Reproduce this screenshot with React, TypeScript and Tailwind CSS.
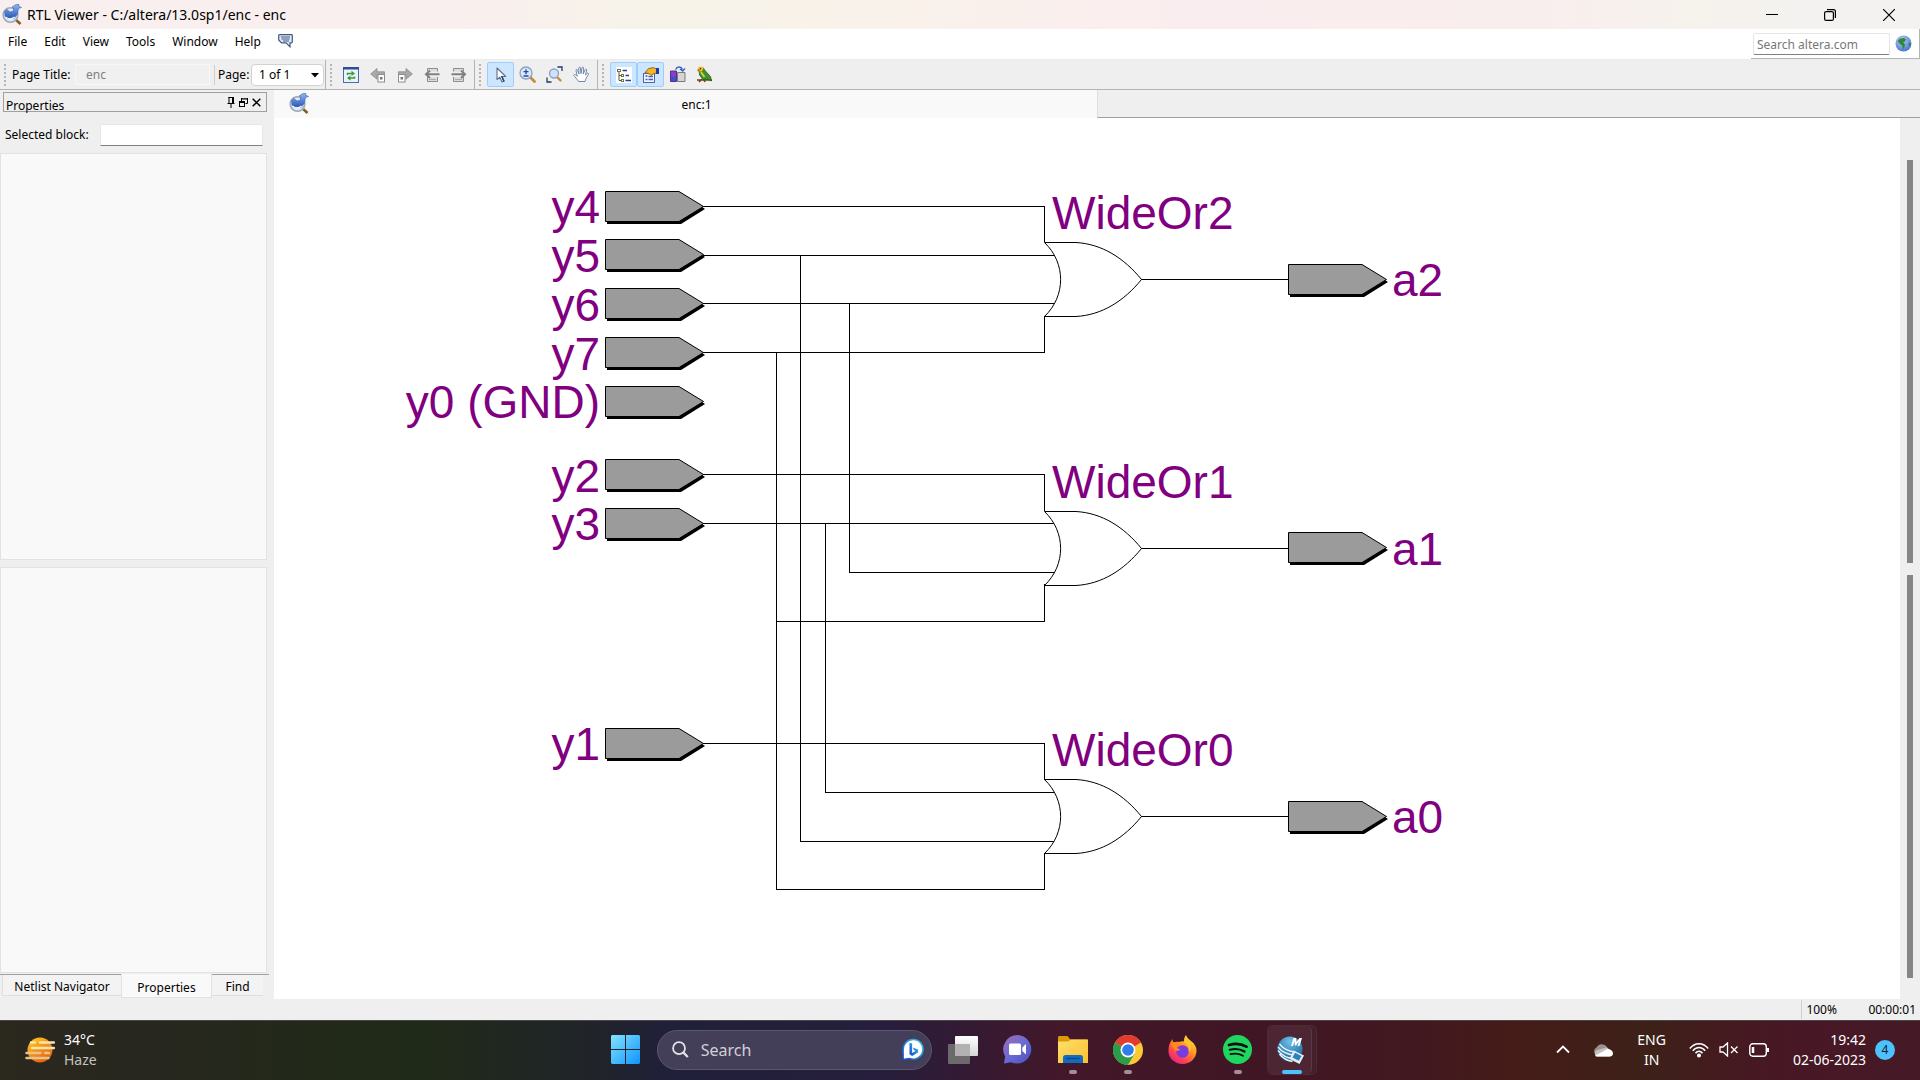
import React from "react";

const UI = "font-['Noto_Sans','Open_Sans',sans-serif]";

/* ---------- small drawings ---------- */

function AppIcon() {
  return (
    <svg width="20" height="21" viewBox="0 0 20 21" aria-hidden="true">
      <defs>
        <linearGradient id="birdBlue" x1="0" y1="0" x2="0" y2="1">
          <stop offset="0" stopColor="#8fb4f2" />
          <stop offset="1" stopColor="#2a56b8" />
        </linearGradient>
      </defs>
      <path d="M13.500 15.500l5 4.500" stroke="#8a5a22" strokeWidth="2.600" />
      <circle cx="8.500" cy="11" r="7.300" fill="#dfe9f6" stroke="#9aa9bb" strokeWidth="1.600" />
      <path d="M2.500 7.500L5 5.500l3 2.500 3.500-1V4L10 3l4-2.500h3L16.500 2l3 1.500-3 1-1 5.500-3.500 4.500H5.500L3 12z" fill="url(#birdBlue)" stroke="#3f66b5" strokeWidth=".6" />
      <path d="M4 13c2 2.500 6 2.500 8.500 0" stroke="#fff" strokeWidth="1.200" fill="none" />
    </svg>
  );
}

function FeedbackIcon() {
  return (
    <svg width="15" height="14" viewBox="0 0 15 14" aria-hidden="true">
      <path d="M1.500.7h12c.5 0 .8.4.8.8v6.500c0 .5-.3.8-.8.8h-1.500V12.800L8 8.800H3.500L.7 6V1.500c0-.4.4-.8.8-.8z" fill="#dbe8f8" stroke="#44597c" strokeWidth="1.200" />
      <path d="M3 3h9M3.500 5h8M5 7h6" stroke="#44597c" />
    </svg>
  );
}

function RefreshIcon() {
  return (
    <svg width="16" height="16" viewBox="0 0 16 16" aria-hidden="true">
      <rect x=".5" y=".5" width="15" height="15" fill="#eaf2fb" stroke="#4a6fa8" />
      <rect x="0" y="0" width="16" height="2.500" fill="#2d4f98" />
      <path d="M4.500 8V6.500h5" stroke="#3c9a32" strokeWidth="1.500" fill="none" />
      <path d="M8.500 3.800l3.500 2.700-3.500 2.500z" fill="#3c9a32" />
      <path d="M11.500 9.500v1.500h-5" stroke="#3c9a32" strokeWidth="1.500" fill="none" />
      <path d="M7.500 8.500L4 11l3.500 2.700z" fill="#3c9a32" />
    </svg>
  );
}

function NavArrow({ flip = false }: { flip?: boolean }) {
  return (
    <svg width="16" height="16" viewBox="0 0 16 16" aria-hidden="true" className={flip ? "-scale-x-100" : ""}>
      <path d="M.7 7L7 1.500v3.300h7.500v3H7v4.400z" fill="#a9a9a9" stroke="#8c8c8c" strokeWidth=".8" />
      <rect x="8" y="7.500" width="6.500" height="7.500" fill="#fff" stroke="#8c8c8c" />
      <rect x="10" y="10" width="2.500" height="2.500" fill="#777" />
    </svg>
  );
}

function PageArrow({ flip = false }: { flip?: boolean }) {
  return (
    <svg width="16" height="16" viewBox="0 0 16 16" aria-hidden="true" className={flip ? "-scale-x-100" : ""}>
      <path d="M3.500 4.500v-3h10v3M3.500 10v4.500h10V10" fill="#dcdcdc" stroke="#8e8e8e" />
      <path d="M5 12.500h7" stroke="#aaa" />
      <path d="M15.500 7.200H3M6 3.500L2 7.200 6 11" fill="none" stroke="#808080" strokeWidth="2" />
    </svg>
  );
}

function CursorIcon() {
  return (
    <svg width="16" height="16" viewBox="0 0 16 16" aria-hidden="true">
      <path d="M4 1v11.500l2.800-2.300L9 15l2-1-2-4.500h3.700z" fill="#fff" stroke="#5c6f8d" strokeWidth="1.100" strokeLinejoin="round" />
      <path d="M8.500 9l2.500 5.500" stroke="#2f4468" strokeWidth="1.600" />
    </svg>
  );
}

function ZoomIcon() {
  return (
    <svg width="17" height="17" viewBox="0 0 17 17" aria-hidden="true">
      <path d="M11 11l4.500 4.500" stroke="#c98a3c" strokeWidth="2.800" strokeLinecap="round" />
      <circle cx="7" cy="7" r="6" fill="#d9e8fa" stroke="#8aa1c2" strokeWidth="1.300" />
      <path d="M7 3.200v5M4.500 5.700h5M4.500 10h5" stroke="#2746a0" strokeWidth="1.300" />
    </svg>
  );
}

function FitIcon() {
  return (
    <svg width="17" height="17" viewBox="0 0 17 17" aria-hidden="true">
      <path d="M11.500 1h4.500v4M1 11.500V16h4.500" fill="none" stroke="#1f3b63" strokeWidth="1.300" />
      <path d="M10.500 10.500l4 4" stroke="#c98a3c" strokeWidth="2.400" strokeLinecap="round" />
      <circle cx="8" cy="7.500" r="4.500" fill="#cfe1f6" stroke="#8aa1c2" strokeWidth="1.300" />
    </svg>
  );
}

function HandIcon() {
  return (
    <svg width="17" height="17" viewBox="0 0 17 17" aria-hidden="true">
      <path d="M5.500 15.500C4 13 2 11 .9 9.500c-.4-.9.8-1.500 1.600-.7L4.300 10.300 3 4.300c-.1-1 1.200-1.200 1.500-.3L6 8 5.800 2c0-1.100 1.500-1.100 1.600 0L8 7.500l1-5.800c.2-1 1.500-.8 1.500.2L10.200 8l2-4.500c.5-.9 1.600-.4 1.400.5L12.500 9l1.800-1.700c.8-.5 1.700.2 1.200 1l-2.500 4.200-1 3z" fill="#fff" stroke="#7088ae" strokeWidth="1" strokeLinejoin="round" />
    </svg>
  );
}

function TreeIcon() {
  return (
    <svg width="16" height="16" viewBox="0 0 16 16" aria-hidden="true">
      <rect width="16" height="16" fill="#fff" />
      <path d="M3 4v9.500h3M3 8.500h3" fill="none" stroke="#555" />
      <rect x="1.500" y="2.500" width="3" height="2" fill="#fff" stroke="#6b7b3c" />
      <rect x="5.500" y="7.500" width="2" height="2" fill="#fff" stroke="#6b7b3c" />
      <rect x="5.500" y="12.500" width="2" height="2" fill="#fff" stroke="#6b7b3c" />
      <path d="M6.500 3.500H11M9.500 8.500H13M9.500 13.500H15" stroke="#2b3f9e" strokeWidth="1.300" />
    </svg>
  );
}

function PropertyIcon() {
  return (
    <svg width="16" height="16" viewBox="0 0 16 16" aria-hidden="true">
      <rect x=".5" y="6.500" width="11" height="9" fill="#f3f6fc" stroke="#52669c" />
      <path d="M2.500 9h2M2.500 12.500h2M5.500 9.500h4.500M5.500 12.500h4.500" stroke="#3f5fb8" strokeWidth="1.300" />
      <path d="M2 5.500l3.500-4 5-.9 3 1.400v4L10 7 8 8.500 6.500 7z" fill="#f3b52a" stroke="#7b5310" strokeWidth=".8" />
      <rect x="13" y="1" width="3" height="6" fill="#1c3ea4" />
    </svg>
  );
}

function ExchangeIcon() {
  return (
    <svg width="16" height="17" viewBox="0 0 16 17" aria-hidden="true">
      <path d="M.5 5h6v10.500h-6z" fill="#8a3fc4" stroke="#5e2a94" />
      <path d="M1 10.500h5v4.500H1z" fill="#3e4fd0" />
      <path d="M7.500 6.500h7.500v9H7.500z" fill="#d4d4d4" stroke="#7c7c7c" />
      <path d="M5.500 3.500c1.500-3 5.500-3.500 7 0M10 3l2.700 2L15 2.500" fill="none" stroke="#2f66c8" strokeWidth="1.400" />
    </svg>
  );
}

function ParrotIcon() {
  return (
    <svg width="17" height="17" viewBox="0 0 17 17" aria-hidden="true">
      <path d="M1 14h15M3 16l3-3M9 16l-1-2" stroke="#6a4426" strokeWidth="1.600" />
      <path d="M3 1.500h4l2 3 5.500 6 1 4.500-3-1.500H7L3.500 9z" fill="#3f8f2c" stroke="#22551a" strokeWidth=".7" />
      <path d="M2 1.500C3.500 0 6.500.2 7.500 2.500L6 5 3.500 6z" fill="#f4c629" />
      <path d="M1 4l2.500-1v3.500z" fill="#d4461c" />
      <path d="M5 6l3.500 5" stroke="#d7d531" strokeWidth="1.800" />
      <circle cx="4.500" cy="2.700" r=".7" fill="#111" />
    </svg>
  );
}

function GlobeIcon() {
  return (
    <svg width="17" height="17" viewBox="0 0 17 17" aria-hidden="true">
      <defs>
        <radialGradient id="globe" cx=".4" cy=".3" r=".8">
          <stop offset="0" stopColor="#b9d3fb" />
          <stop offset="1" stopColor="#3a68cb" />
        </radialGradient>
      </defs>
      <circle cx="8.500" cy="8.500" r="8" fill="url(#globe)" />
      <path d="M2.500 6L5 3.500l4-.5 2 1.500-1.500 2.500-1.500.5L10 9l-.5 3-1.700 2.500L7.500 11 4.500 8.500z" fill="#2f8a36" />
      <path d="M14 7.500l2 1.500-1 2.500-1.500-1.500z" fill="#2f8a36" />
    </svg>
  );
}

/* ---------- chrome ---------- */

function TitleBar() {
  return (
    <header className="flex h-[29px] items-center bg-[linear-gradient(90deg,#f9efee_0%,#f9efee_24%,#f7f3e9_34%,#f9f2ea_46%,#faedef_62%,#f9eeee_80%,#f6f2ec_88%,#f3f2f1_96%)] pl-[2px]">
      <AppIcon />
      <h1 className="ml-[5px] grow text-[14px] leading-5">RTL Viewer - C:/altera/13.0sp1/enc - enc</h1>
      <button aria-label="Minimize" className="flex h-full w-[56px] items-center justify-center">
        <svg width="12" height="12" viewBox="0 0 12 12"><path d="M0 5.500h12" stroke="#000" /></svg>
      </button>
      <button aria-label="Restore" className="flex h-full w-[60px] items-center justify-center">
        <svg width="12" height="12" viewBox="0 0 12 12" fill="none" stroke="#000" strokeWidth="1.200">
          <rect x=".6" y="2.600" width="8.800" height="8.800" rx="1.500" />
          <path d="M3 .6h6.500c1.200 0 1.900.8 1.900 1.900V9" />
        </svg>
      </button>
      <button aria-label="Close" className="flex h-full w-[60px] items-center justify-center pr-[2px]">
        <svg width="12" height="12" viewBox="0 0 12 12"><path d="M0 0l12 12M12 0L0 12" stroke="#000" strokeWidth="1.200" /></svg>
      </button>
    </header>
  );
}

function MenuBar() {
  return (
    <nav className="flex h-[31px] items-start border-b border-[#ececec] bg-white pl-[8px] text-[12px]">
      <div className="flex h-[26px] items-center gap-[17px]">
        {["File", "Edit", "View", "Tools", "Window", "Help"].map((m) => (
          <button key={m}>{m}</button>
        ))}
        <button aria-label="Feedback" className="pb-[2px]"><FeedbackIcon /></button>
      </div>
      <form className="ml-auto flex h-[30px] items-center gap-[5px] border-r border-b border-[#b4b4b4] pr-[7px] pl-[2px]">
        <input
          aria-label="Search altera.com"
          placeholder="Search altera.com"
          className="h-[22px] w-[137px] rounded-[2px] border border-[#e6e6e6] border-b-[#808080] px-[3px] pt-[2px] text-[12px] outline-none placeholder:text-[#777]"
        />
        <button type="button" aria-label="Search the web"><GlobeIcon /></button>
      </form>
    </nav>
  );
}

function Grip() {
  return (
    <span className="flex flex-col gap-[2px]">
      {[0, 1, 2, 3, 4, 5].map((i) => (
        <span key={i} className="h-[2px] w-[2px] bg-[#b5b5b5]" />
      ))}
    </span>
  );
}

function Tool({ label, on = false, children }: { label: string; on?: boolean; children: React.ReactNode }) {
  return (
    <button
      aria-label={label}
      className={`flex h-[25px] w-[27px] items-center justify-center rounded-[2px] border ${on ? "border-[#99cfff] bg-[#cce6ff]" : "border-transparent"}`}
    >
      {children}
    </button>
  );
}

function Toolbar() {
  return (
    <div className="flex h-[30px] items-stretch border-b border-[#b3b3b3] bg-[#efefef] text-[12px]">
      <div className="flex items-center border-r border-[#b3b3b3] pl-[4px]">
        <Grip />
        <label htmlFor="title" className="ml-[6px] w-[63px]">Page Title:</label>
        <input id="title" disabled value="enc" readOnly className="h-[21px] w-[135px] border border-[#f7f7f7] bg-[#f0f0f0] pl-[10px] text-[12px] text-[#808080]" />
        <span className="ml-[4px] h-[20px] w-px bg-[#cfcfcf]" />
        <label htmlFor="page" className="ml-[3px] w-[33px]">Page:</label>
        <span className="relative">
          <select id="page" className="block h-[22px] w-[73px] appearance-none rounded-[4px] border border-[#d2d2d2] bg-white pl-[7px] text-[12px]">
            <option>1 of 1</option>
          </select>
          <svg width="8" height="5" viewBox="0 0 8 5" className="pointer-events-none absolute top-[9px] right-[5px]"><path d="M0 0h8L4 4.500z" /></svg>
        </span>
        <span className="w-px" />
      </div>
      <div className="flex items-center border-r border-[#b3b3b3] pr-[2px] pl-[4px]">
        <Grip />
        <span className="ml-[5px] flex items-center">
          <Tool label="Refresh"><RefreshIcon /></Tool>
          <Tool label="Back"><NavArrow /></Tool>
          <Tool label="Forward"><NavArrow flip /></Tool>
          <Tool label="Previous page"><PageArrow /></Tool>
          <Tool label="Next page"><PageArrow flip /></Tool>
        </span>
      </div>
      <div className="flex items-center border-r border-[#b3b3b3] pr-[2px] pl-[4px]">
        <Grip />
        <span className="ml-[6px] flex items-center">
          <Tool label="Selection tool" on><CursorIcon /></Tool>
          <Tool label="Zoom tool"><ZoomIcon /></Tool>
          <Tool label="Fit in window"><FitIcon /></Tool>
          <Tool label="Hand tool"><HandIcon /></Tool>
        </span>
      </div>
      <div className="flex items-center pl-[4px]">
        <Grip />
        <span className="ml-[6px] flex items-center">
          <Tool label="Netlist navigator" on><TreeIcon /></Tool>
          <Tool label="Properties" on><PropertyIcon /></Tool>
          <Tool label="Switch view"><ExchangeIcon /></Tool>
          <Tool label="Bird's eye view"><ParrotIcon /></Tool>
        </span>
      </div>
    </div>
  );
}

function PropertiesDock() {
  return (
    <aside className="flex w-[274px] shrink-0 flex-col pb-[1px] text-[12px]">
      <div className="mt-[2px] ml-[3px] flex h-[20px] w-[264px] items-center border border-[#a0a0a0] pr-[5px] pl-[2px]">
        <h2 className="grow pt-[8px] leading-4">Properties</h2>
        <span className="flex items-center gap-[4px]">
          <button aria-label="Pin">
            <svg width="8" height="11" viewBox="0 0 8 11" fill="none" stroke="#000"><path d="M2 0v6M1.500.5h5M5.500 0v6M6.500 0v6M.5 6.500h7M4 6.500V11" /></svg>
          </button>
          <button aria-label="Float">
            <svg width="9" height="9" viewBox="0 0 9 9" fill="none" stroke="#000"><path d="M3 1h5.500M3 0h6M8.500 0v5.500H6.500M2.500 0v3" /><rect x=".5" y="3.500" width="5" height="5" /><path d="M0 4.500h6" /></svg>
          </button>
          <button aria-label="Close panel">
            <svg width="9" height="9" viewBox="0 0 9 9" stroke="#000" strokeWidth="1.500"><path d="M.7.7l7.600 7.600M8.300.7L.7 8.300" /></svg>
          </button>
        </span>
      </div>
      <div className="flex h-[41px] items-center pt-[5px] pl-[5px]">
        <label htmlFor="block" className="w-[95px]">Selected block:</label>
        <input id="block" className="h-[22px] w-[163px] border border-[#e8e8e8] border-b-[#808080] bg-white px-[3px] outline-none" />
      </div>
      <section aria-label="Block properties" className="w-[267px] flex-1 border border-[#e2e2e2] bg-[#f9f9f9]" />
      <section aria-label="Property values" className="mt-[7px] w-[267px] flex-1 border border-[#e2e2e2] bg-[#f9f9f9]" />
      <div className="mt-[1px] flex h-[24px] w-[269px] items-start border-t border-[#a0a0a0] pl-[2px]">
        <button className="h-[21px] w-[119px] border-b border-l border-[#dedede] bg-[#f3f3f3] pt-[3px]">Netlist Navigator</button>
        <button className="-mt-px h-[24px] w-[91px] border-x border-b border-[#e2e2e2] bg-[#f9f9f9] pt-[4px]">Properties</button>
        <button className="h-[21px] w-[51px] border-b border-[#dedede] bg-[#f3f3f3] pt-[3px]">Find</button>
      </div>
    </aside>
  );
}

/* ---------- schematic ---------- */

const inputs = [
  { name: "y4", top: 191, base: 223 },
  { name: "y5", top: 239, base: 272 },
  { name: "y6", top: 288, base: 321 },
  { name: "y7", top: 337, base: 370 },
  { name: "y0 (GND)", top: 386, base: 418 },
  { name: "y2", top: 459, base: 492 },
  { name: "y3", top: 508, base: 540 },
  { name: "y1", top: 728, base: 760 },
];

const gates = [
  { name: "WideOr2", out: "a2", mid: 279, top: 264 },
  { name: "WideOr1", out: "a1", mid: 548, top: 532 },
  { name: "WideOr0", out: "a0", mid: 816, top: 801 },
];

const wires = [
  "M703 206.500H1044.500V242",
  "M703 255.500H1055",
  "M703 303.500H1055",
  "M703 352.500H1044.500V316",
  "M703 474.500H1044.500V511",
  "M703 523.500H1055",
  "M849.500 303V572.500H1055",
  "M776.500 621.500H1044.500V584",
  "M703 743.500H1044.500V780",
  "M825.500 523V792.500H1055",
  "M800.500 255V841.500H1055",
  "M776.500 352V889.500H1044.500V853",
];

function Tag({ x, y }: { x: number; y: number }) {
  return (
    <g transform={`translate(${x} ${y})`}>
      <path d="M2 2H76L100 18L76 33H2z" fill="#000" />
      <path d="M.5.500H74L98.500 15.500L74 30.500H.5z" fill="#9b9b9b" stroke="#000" />
    </g>
  );
}

function Schematic() {
  return (
    <svg className="block h-full w-full" role="img" aria-label="Encoder schematic">
      <g transform="translate(-274 -118)" fontFamily="'Liberation Sans', Arial, sans-serif" fontSize="46" fill="#800080">
        <path d={wires.join("")} fill="none" stroke="#000" shapeRendering="crispEdges" />
        {inputs.map((p) => (
          <g key={p.name}>
            <Tag x={605} y={p.top} />
            <text x="600" y={p.base} textAnchor="end">{p.name}</text>
          </g>
        ))}
        {gates.map((g) => (
          <g key={g.name}>
            <g transform={`translate(0 ${g.mid})`}>
              <path d="M1044.500-36.500H1076C1102-35 1124-21 1141.500.500C1124 22 1102 36 1076 37.500H1044.500C1066 17 1066-16 1044.500-36.500z" fill="#fff" stroke="#000" />
              <path d="M1141 .5H1288" stroke="#000" />
            </g>
            <Tag x={1288} y={g.top} />
            <text x="1052" y={g.mid - 50}>{g.name}</text>
            <text x="1392" y={g.mid + 17}>{g.out}</text>
          </g>
        ))}
      </g>
    </svg>
  );
}

function Workspace() {
  return (
    <main className="flex min-w-0 grow flex-col">
      <div className="flex h-[28px] text-[12px]">
        <div className="relative flex w-1/2 items-center justify-center bg-[#f9f9f9] pt-[2px] pl-[22px]">
          <span className="absolute top-[3px] left-[15px]"><AppIcon /></span>
          <span>enc:1</span>
        </div>
        <div className="grow border-b border-l border-b-[#a0a0a0] border-l-[#dedede]" />
      </div>
      <div className="flex min-h-0 grow">
        <div className="min-w-0 grow overflow-hidden bg-white"><Schematic /></div>
        <div className="flex w-[20px] flex-col items-center gap-[12px] pt-[42px] pb-[21px]">
          <span className="w-[6px] flex-1 bg-[#868686]" />
          <span className="w-[6px] flex-1 bg-[#868686]" />
        </div>
      </div>
    </main>
  );
}

/* ---------- taskbar ---------- */

function WeatherIcon() {
  return (
    <svg width="30" height="26" viewBox="0 0 30 26" aria-hidden="true">
      <defs>
        <linearGradient id="sun" x1="0" y1="0" x2=".6" y2="1">
          <stop offset="0" stopColor="#ffd21c" />
          <stop offset="1" stopColor="#ea5f12" />
        </linearGradient>
      </defs>
      <circle cx="15" cy="13" r="12.500" fill="url(#sun)" />
      <g stroke="#f8e3b0" strokeWidth="2.500" strokeLinecap="round">
        <path d="M6 5.500h4M15 5.500h14M7 11h22" />
        <path d="M1.500 16h14M20 16h4M1.500 21h22" stroke="#e4c48c" />
      </g>
    </svg>
  );
}

function WindowsIcon() {
  return (
    <svg width="29" height="29" viewBox="0 0 29 29" aria-hidden="true">
      <defs>
        <linearGradient id="win" x1="0" y1="0" x2="29" y2="29" gradientUnits="userSpaceOnUse">
          <stop offset="0" stopColor="#84e4ff" />
          <stop offset="1" stopColor="#0f93fb" />
        </linearGradient>
      </defs>
      <path d="M1 0h13v14H0V1zM15 0h13l1 1v13H15zM0 15h14v14H1l-1-1zM15 15h14v13l-1 1H15z" fill="url(#win)" />
    </svg>
  );
}

function BingIcon() {
  return (
    <svg width="25" height="25" viewBox="0 0 25 25" aria-hidden="true">
      <defs>
        <linearGradient id="bing" x1="1" y1="0" x2="0" y2="1">
          <stop offset="0" stopColor="#37c8f0" />
          <stop offset="1" stopColor="#1548c8" />
        </linearGradient>
      </defs>
      <path d="M12.500 1.200a11.200 11.200 0 1 1-4 21.600L1.200 23.800V12.500A11.200 11.200 0 0 1 12.500 1.200z" fill="#fff" stroke="url(#bing)" strokeWidth="1.800" />
      <path d="M8.500 4.800l3 1v10.700l4-2.300-2-1-1.200-3 6 2.200v3.400l-6.800 4-3-1.800z" fill="url(#bing)" />
    </svg>
  );
}

function TaskViewIcon() {
  return (
    <svg width="30" height="28" viewBox="0 0 30 28" aria-hidden="true">
      <defs>
        <linearGradient id="tv" x1="0" y1="0" x2="0" y2="1">
          <stop offset="0" stopColor="#fff" />
          <stop offset="1" stopColor="#d6d6d6" />
        </linearGradient>
      </defs>
      <rect x="0" y="8" width="22" height="20" rx="1" fill="#6c6a6b" />
      <rect x="7" y="0" width="23" height="20" rx="1" fill="url(#tv)" />
      <path d="M7 8h15v12H7z" fill="#b3b1b2" />
    </svg>
  );
}

function ChatIcon() {
  return (
    <svg width="29" height="29" viewBox="0 0 29 29" aria-hidden="true">
      <defs>
        <linearGradient id="chat" x1="0" y1="0" x2="1" y2="1">
          <stop offset="0" stopColor="#a06cb4" />
          <stop offset=".5" stopColor="#6a6bd2" />
          <stop offset="1" stopColor="#4a50c0" />
        </linearGradient>
      </defs>
      <path d="M14.500 0A14.300 14.300 0 1 1 8 27.300L1 28.500l1.200-7A14.300 14.300 0 0 1 14.500 0z" fill="url(#chat)" />
      <rect x="6" y="8.500" width="12" height="11.500" rx="1.500" fill="#fff" />
      <path d="M19.300 12.500L23 9v10.500l-3.700-3.500z" fill="#fff" />
    </svg>
  );
}

function FolderIcon() {
  return (
    <svg width="30" height="27" viewBox="0 0 30 27" aria-hidden="true">
      <defs>
        <linearGradient id="fold" x1="0" y1="0" x2="1" y2="1">
          <stop offset="0" stopColor="#ffe06e" />
          <stop offset="1" stopColor="#fbbf2d" />
        </linearGradient>
      </defs>
      <path d="M0 1.500C0 .7.600 0 1.500 0h8l3 3.500H28c1 0 2 .5 2 1.500v6H0z" fill="#dc9a08" />
      <path d="M0 5.500h10L13 3.500h17V27H0z" fill="url(#fold)" />
      <path d="M5 27v-5.500C5 20 6 19 7.500 19h15c1.500 0 2.500 1 2.500 2.500V27z" fill="#0f6cc0" />
      <path d="M8.500 22.500h13" stroke="#0a3f80" strokeWidth="1.200" />
    </svg>
  );
}

function ChromeIcon() {
  return (
    <svg width="30" height="30" viewBox="0 0 30 30" aria-hidden="true">
      <circle cx="15" cy="15" r="15" fill="#fcc934" />
      <path d="M15 15L2 7.500A15 15 0 0 1 28 7.500z" fill="#e33b2e" />
      <path d="M2 7.500A15 15 0 0 0 15 30l6.500-11.200L15 15z" fill="#2a9c4c" />
      <circle cx="15" cy="15" r="7.500" fill="#fff" />
      <circle cx="15" cy="15" r="5.800" fill="#2f7ded" />
    </svg>
  );
}

function FirefoxIcon() {
  return (
    <svg width="29" height="29" viewBox="0 0 29 29" aria-hidden="true">
      <defs>
        <linearGradient id="ff" x1=".9" y1="0" x2=".2" y2="1">
          <stop offset="0" stopColor="#fff24a" />
          <stop offset=".4" stopColor="#ff9a1f" />
          <stop offset=".75" stopColor="#ff4052" />
          <stop offset="1" stopColor="#e0208c" />
        </linearGradient>
      </defs>
      <path d="M18 0c1 3 3 4 5 6 4 3 5.800 6.500 5.500 10.500C28 23.500 22 29 14.500 29S.5 23.500.5 16C.3 11 2 7 4.500 4c0 1.500.3 2.500 1 3.500C7 7 9 6.500 11 7c2-1 4-1 5-.5C15.800 4 16.500 2 18 0z" fill="url(#ff)" />
      <circle cx="14.500" cy="16.500" r="6.300" fill="#7a3ae0" />
      <path d="M3 9c2-2.500 6-2.500 9 0-1 .5-2 1.500-3.500 1.800C8 13 10 14.500 12.500 14c-1.500 2-4 2-5.500 1.500z" fill="#ff8a1c" />
      <path d="M16 7c4 2 5.800 6 4.500 10 2-1 3-4 2.500-7-2-4-5-3-5-6z" fill="#ffc62e" />
    </svg>
  );
}

function SpotifyIcon() {
  return (
    <svg width="29" height="29" viewBox="0 0 29 29" aria-hidden="true">
      <circle cx="14.500" cy="14.500" r="14.500" fill="#1ed760" />
      <g fill="none" stroke="#0c0c0c" strokeLinecap="round">
        <path d="M6 10c6-1.800 12.500-1.200 17.500 1.700" strokeWidth="2.700" />
        <path d="M6.800 14.800c5-1.400 10.500-.8 14.700 1.700" strokeWidth="2.200" />
        <path d="M7.500 19.200c4.500-1 8.800-.6 12.500 1.500" strokeWidth="1.800" />
      </g>
    </svg>
  );
}

function QuartusIcon() {
  return (
    <svg width="30" height="30" viewBox="0 0 30 30" aria-hidden="true">
      <defs>
        <radialGradient id="qt" cx=".5" cy=".2" r=".9">
          <stop offset="0" stopColor="#6fc0ea" />
          <stop offset="1" stopColor="#0c5690" />
        </radialGradient>
      </defs>
      <circle cx="15" cy="14" r="12.500" fill="url(#qt)" />
      <path d="M3 12c4 5 8 7.500 16 8M3 15.500c4 5 8 7.500 15 8M4.500 19c3 4 7 6.500 13 7.500M4.500 9c4 5 9 7.500 16 8" stroke="#eaf4fb" strokeWidth="1.300" fill="none" />
      <path d="M16 11l2.500-8H21l.5 4L24.500 3H27l-2.500 8h-2l1.500-4.500L21 10.500h-1L19.500 6.500 18 11z" fill="#fff" />
      <path d="M18.500 15.500L29 20.500l-4.500 8.500-10-5z" fill="#e5eef5" />
      <path d="M20 17.800l6.500 3.200-2.700 4.800-6.300-3.200z" fill="#2a83bd" />
    </svg>
  );
}

function TaskCell({ label, dot = false, children }: { label: string; dot?: boolean; children: React.ReactNode }) {
  return (
    <button aria-label={label} className="relative flex h-[60px] w-[55px] items-center justify-center">
      {children}
      {dot && <span className="absolute bottom-[6px] h-[4px] w-[8px] rounded-full bg-[#a48e98]" />}
    </button>
  );
}

function Taskbar() {
  return (
    <footer className="flex h-[60px] items-center border-t border-[#4a4648] bg-[linear-gradient(90deg,#2b281e_0%,#27271f_8%,#23291a_15%,#202a18_22%,#20242a_31%,#20203a_35%,#261e3c_46%,#331a34_50%,#42182a_55%,#401624_66%,#421820_74%,#451c18_79%,#3d2119_86%,#451a20_90%,#481726_94%,#451a26_100%)] pb-[2px] text-[14px] leading-5 text-white">
      <div className="flex flex-1 items-center gap-[9px] pl-[25px]">
        <WeatherIcon />
        <div>
          <div>34°C</div>
          <div className="text-[#c4c2bf]">Haze</div>
        </div>
      </div>
      <div className="flex items-center pl-[8px]">
        <button aria-label="Start"><WindowsIcon /></button>
        <label className="ml-[17px] flex h-[40px] w-[275px] items-center rounded-full border border-[#5c5670] bg-[#433f58] pr-[7px] pl-[14px]">
          <svg width="19" height="19" viewBox="0 0 19 19" fill="none" stroke="#e6e4ea" strokeWidth="2"><circle cx="8" cy="8" r="6.800" /><path d="M12.800 12.800L18 18" strokeWidth="2.500" /></svg>
          <input aria-label="Search" placeholder="Search" className="ml-[12px] min-w-0 grow bg-transparent text-[16px] outline-none placeholder:text-[#d2cfd8]" />
          <BingIcon />
        </label>
        <div className="ml-[3px] flex">
          <TaskCell label="Task view"><TaskViewIcon /></TaskCell>
          <TaskCell label="Chat"><ChatIcon /></TaskCell>
          <TaskCell label="File Explorer" dot><FolderIcon /></TaskCell>
          <TaskCell label="Chrome" dot><ChromeIcon /></TaskCell>
          <TaskCell label="Firefox"><FirefoxIcon /></TaskCell>
          <TaskCell label="Spotify" dot><SpotifyIcon /></TaskCell>
          <button aria-label="Quartus" className="relative mt-[5px] ml-[2px] flex h-[50px] w-[50px] rounded-[5px] border border-[#4f2a36] bg-[#44202c]">
            <span className="flex w-[44px] items-center justify-center rounded-[5px] border-r border-[#5d3743] bg-[#4c2733]"><QuartusIcon /></span>
            <span className="absolute bottom-0 left-[14px] h-[4px] w-[20px] rounded-full bg-[#4cc2ff]" />
          </button>
        </div>
      </div>
      <div className="flex flex-1 items-center justify-end pr-[25px]">
        <button aria-label="Show hidden icons">
          <svg width="14" height="9" viewBox="0 0 14 9"><path d="M1 7.500l6-6 6 6" fill="none" stroke="#fff" strokeWidth="1.800" /></svg>
        </button>
        <svg className="ml-[23px]" width="20" height="14" viewBox="0 0 20 14" aria-hidden="true">
          <path d="M4 12A4 4 0 0 1 3.500 4.500 6 6 0 0 1 14 4l2 3z" fill="#9b9290" />
          <path d="M4 13.500A3.600 3.600 0 0 1 3 7.500L13 4.500l4 2a4 4 0 0 1 0 7z" fill="#c6c0be" />
          <path d="M2 12.500l9-4.500 3-2c3 0 6 1.500 6 4.500 0 2-1.500 3-3 3H4c-1 0-1.500-.5-2-1z" fill="#fff" />
        </svg>
        <div className="ml-[24px] text-center"><div>ENG</div><div>IN</div></div>
        <svg className="ml-[23px]" width="20" height="16" viewBox="0 0 20 16" fill="none" stroke="#fff" strokeWidth="1.500" aria-hidden="true">
          <path d="M.8 6.500c5-6.500 13.400-6.500 18.400 0M3.800 8.800c3.500-4.500 9-4.500 12.400 0M6.500 11.200c2-2.700 5-2.700 7 0" />
          <circle cx="10" cy="13.500" r="1.300" fill="#fff" />
        </svg>
        <svg className="ml-[10px]" width="20" height="15" viewBox="0 0 20 15" fill="none" stroke="#fff" strokeWidth="1.300" aria-hidden="true">
          <path d="M1 5h3l4.500-4v13L4 10H1zM12 4.500l6.500 6.500M18.500 4.500L12 11" />
        </svg>
        <svg className="ml-[10px]" width="20" height="14" viewBox="0 0 20 14" fill="none" stroke="#fff" strokeWidth="1.400" aria-hidden="true">
          <rect x=".8" y=".8" width="16.500" height="12.400" rx="3" />
          <path d="M19 5v4" strokeWidth="2" />
          <path d="M4 4v6" strokeWidth="2.500" />
        </svg>
        <div className="ml-[24px] text-right"><div>19:42</div><div>02-06-2023</div></div>
        <span className="ml-[9px] flex h-[20px] w-[20px] items-center justify-center rounded-full bg-[#4cc2ff] text-[12px] text-[#102030]">4</span>
      </div>
    </footer>
  );
}

export default function App() {
  return (
    <div className={`flex h-screen flex-col bg-[#efefef] text-black ${UI}`}>
      <TitleBar />
      <MenuBar />
      <Toolbar />
      <div className="flex min-h-0 grow">
        <PropertiesDock />
        <Workspace />
      </div>
      <div className="flex h-[21px] justify-end text-[12px] leading-5">
        <span className="my-px w-[65px] border-l border-[#cfcfcf] pl-[4px]">100%</span>
        <span className="mt-px pr-[4px] pl-[2px]">00:00:01</span>
      </div>
      <Taskbar />
    </div>
  );
}
